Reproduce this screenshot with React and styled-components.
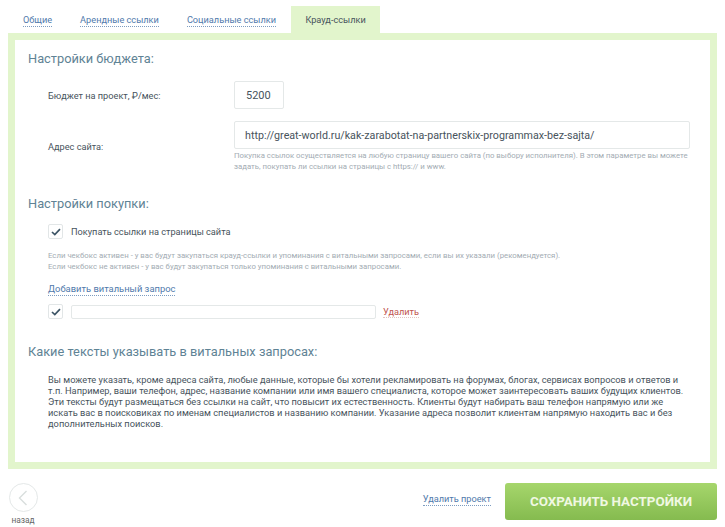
import styled, { createGlobalStyle } from "styled-components";

const GlobalStyle = createGlobalStyle`
  html, body {
    margin: 0;
    padding: 0;
    background: #fff;
    font-family: Roboto, "Liberation Sans", sans-serif;
    color: #47535c;
  }
`;

const tabs = ["Общие", "Арендные ссылки", "Социальные ссылки"];

export default function App() {
  return (
    <Page>
      <GlobalStyle />
      <Tabs>
        {tabs.map((t) => (
          <Tab key={t}>
            <DottedLink>{t}</DottedLink>
          </Tab>
        ))}
        <ActiveTab>Крауд-ссылки</ActiveTab>
      </Tabs>

      <Panel>
        <Heading>Настройки бюджета:</Heading>
        <BudgetRow>
          <FieldLabel>Бюджет на проект, ₽/мес:</FieldLabel>
          <BudgetInput readOnly value="5200" />
        </BudgetRow>
        <SiteRow>
          <FieldLabel>Адрес сайта:</FieldLabel>
          <SiteField>
            <SiteInput
              readOnly
              value="http://great-world.ru/kak-zarabotat-na-partnerskix-programmax-bez-sajta/"
            />
            <Hint>
              Покупка ссылок осуществляется на любую страницу вашего сайта (по выбору исполнителя). В этом параметре вы можете задать, покупать ли ссылки на страницы с https:// и www.
            </Hint>
          </SiteField>
        </SiteRow>

        <PurchaseHeading>Настройки покупки:</PurchaseHeading>
        <Indented>
          <CheckRow>
            <CheckBox />
            <CheckLabel>Покупать ссылки на страницы сайта</CheckLabel>
          </CheckRow>
          <Explain>
            Если чекбокс активен - у вас будут закупаться крауд-ссылки и упоминания с витальными запросами, если вы их указали (рекомендуется).
            <br />
            Если чекбокс не активен - у вас будут закупаться только упоминания с витальными запросами.
          </Explain>
          <AddLink>Добавить витальный запрос</AddLink>
          <QueryRow>
            <CheckBox />
            <QueryInput readOnly value="" />
            <RemoveLink>Удалить</RemoveLink>
          </QueryRow>
        </Indented>

        <TextsHeading>Какие тексты указывать в витальных запросах:</TextsHeading>
        <Body>
          Вы можете указать, кроме адреса сайта, любые данные, которые бы хотели рекламировать на форумах, блогах, сервисах вопросов и ответов и т.п. Например, ваши телефон, адрес, название компании или имя вашего специалиста, которое может заинтересовать ваших будущих клиентов. Эти тексты будут размещаться без ссылки на сайт, что повысит их естественность. Клиенты будут набирать ваш телефон напрямую или же искать вас в поисковиках по именам специалистов и названию компании. Указание адреса позволит клиентам напрямую находить вас и без дополнительных поисков.
        </Body>
      </Panel>

      <Footer>
        <Back>
          <BackCircle>
            <svg width="12" height="18" viewBox="0 0 12 18" fill="none">
              <path d="M9.5 2 L2.5 9 L9.5 16" stroke="#d9dedd" strokeWidth="1.4" />
            </svg>
          </BackCircle>
          <BackLabel>назад</BackLabel>
        </Back>
        <FooterActions>
          <DeleteProject>Удалить проект</DeleteProject>
          <SaveButton>СОХРАНИТЬ НАСТРОЙКИ</SaveButton>
        </FooterActions>
      </Footer>
    </Page>
  );
}

function CheckBox() {
  return (
    <Box>
      <svg width="10" height="8" viewBox="0 0 10 8" fill="none">
        <path d="M1 4 L3.8 6.6 L9 1.2" stroke="#3d5566" strokeWidth="1.7" />
      </svg>
    </Box>
  );
}

const Page = styled.div`
  width: 725px;
  height: 527px;
  overflow: hidden;
  box-sizing: border-box;
  padding: 6px 8px 0;
`;

const Tabs = styled.div`
  display: flex;
  height: 27px;
  padding-left: 15px;
`;

const Tab = styled.div`
  font-size: 9.2px;
  line-height: 27px;
  margin-right: 28px;
`;

const DottedLink = styled.span`
  color: #4f79ab;
  border-bottom: 1px dotted #7d9cc0;
  padding-bottom: 1px;
`;

const ActiveTab = styled.div`
  width: 89px;
  margin-left: -13px;
  background: #e2f5cc;
  color: #47535c;
  font-size: 9.2px;
  line-height: 27px;
  text-align: center;
`;

const Panel = styled.div`
  box-sizing: border-box;
  width: 709px;
  height: 436px;
  border: 7px solid #e2f5cc;
  padding: 11px 13px 0;
`;

const Heading = styled.h2`
  margin: 0;
  font-size: 12.8px;
  line-height: 16px;
  font-weight: 400;
  color: #5f8395;
`;

const BudgetRow = styled.div`
  display: flex;
  align-items: center;
  margin-top: 14px;
  padding-left: 20px;
`;

const FieldLabel = styled.div`
  width: 186px;
  font-size: 9.2px;
  color: #47535c;
`;

const Input = styled.input`
  box-sizing: border-box;
  border: 1px solid #e4e8e8;
  border-radius: 2px;
  outline: none;
  background: #fff;
  font-family: inherit;
  color: #47535c;
`;

const BudgetInput = styled(Input)`
  width: 50px;
  height: 28px;
  padding: 0 11px;
  font-size: 11px;
`;

const SiteRow = styled.div`
  display: flex;
  align-items: center;
  margin-top: 12px;
  padding-left: 20px;
`;

const SiteField = styled.div`
  width: 456px;
`;

const SiteInput = styled(Input)`
  display: block;
  width: 100%;
  height: 28px;
  padding: 0 10px;
  font-size: 10.7px;
`;

const Hint = styled.p`
  margin: 2px 0 0;
  font-size: 7.8px;
  line-height: 10.5px;
  color: #a3acb3;
`;

const PurchaseHeading = styled(Heading)`
  margin-top: 24px;
`;

const Indented = styled.div`
  padding-left: 20px;
`;

const CheckRow = styled.div`
  display: flex;
  align-items: center;
  gap: 8px;
  margin-top: 12px;
`;

const Box = styled.span`
  box-sizing: border-box;
  width: 15px;
  height: 15px;
  flex: none;
  display: flex;
  align-items: center;
  justify-content: center;
  border: 1px solid #e2e6e7;
  border-radius: 2px;
`;

const CheckLabel = styled.span`
  font-size: 9.2px;
  color: #47535c;
`;

const Explain = styled.p`
  margin: 11px 0 0;
  font-size: 7.8px;
  line-height: 11px;
  color: #a3acb3;
`;

const AddLink = styled.span`
  display: inline-block;
  margin-top: 11px;
  font-size: 9.4px;
  line-height: 12px;
  color: #4f79ab;
  border-bottom: 1px dotted #7d9cc0;
`;

const QueryRow = styled.div`
  display: flex;
  align-items: center;
  margin-top: 8px;
`;

const QueryInput = styled(Input)`
  width: 305px;
  height: 14px;
  margin-left: 8px;
  padding: 0;
`;

const RemoveLink = styled.span`
  margin-left: 7px;
  font-size: 9.2px;
  color: #c0544e;
  border-bottom: 1px dotted #e3c3c1;
`;

const TextsHeading = styled(Heading)`
  margin-top: 25px;
`;

const Body = styled.p`
  margin: 14px 0 0 20px;
  width: 640px;
  font-size: 9.28px;
  line-height: 11px;
  color: #47535c;
`;

const Footer = styled.div`
  display: flex;
  justify-content: space-between;
  margin-top: 14px;
`;

const Back = styled.div`
  display: flex;
  flex-direction: column;
  align-items: center;
  width: 30px;
`;

const BackCircle = styled.div`
  box-sizing: border-box;
  width: 29px;
  height: 29px;
  border: 1px solid #e4e8e8;
  border-radius: 50%;
  display: flex;
  align-items: center;
  justify-content: center;
`;

const BackLabel = styled.span`
  margin-top: 3px;
  font-size: 8.4px;
  line-height: 10px;
  color: #666;
`;

const FooterActions = styled.div`
  display: flex;
  align-items: flex-start;
`;

const DeleteProject = styled.span`
  margin-top: 10px;
  font-size: 9.2px;
  line-height: 12px;
  color: #4f79ab;
  border-bottom: 1px dotted #7d9cc0;
`;

const SaveButton = styled.button`
  width: 212px;
  height: 37px;
  margin-left: 14px;
  border: none;
  border-radius: 3px;
  background: linear-gradient(#a6d66c, #85bb4f);
  color: #f0f8e2;
  font-family: inherit;
  font-size: 13.4px;
  font-weight: 700;
  padding: 0;
`;
